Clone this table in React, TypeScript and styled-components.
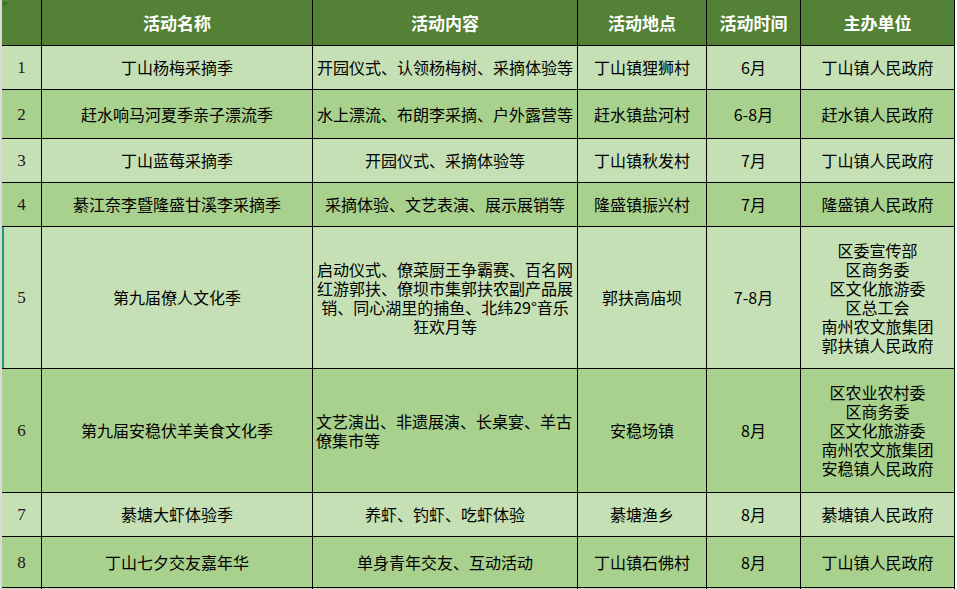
import React from "react";
import styled, { createGlobalStyle } from "styled-components";

const Global = createGlobalStyle`
  html, body { margin: 0; padding: 0; background: #ffffff; }
  body { font-family: "Noto Sans CJK SC", "Noto Sans", sans-serif; overflow: hidden; }
`;

const COLS = "40px 271px 265px 129px 94px 154px";

const Sheet = styled.div`
  display: flex;
  width: 957px;
  height: 589px;
  overflow: hidden;
`;

const Gutter = styled.div`
  width: 2px;
  flex: none;
  background: #d9d9d9;
`;

const Table = styled.div`
  display: flex;
  flex-direction: column;
  width: 953px;
  flex: none;
`;

const Row = styled.div<{ $h: number; $bg: string }>`
  display: grid;
  grid-template-columns: ${COLS};
  height: ${(p) => p.$h}px;
  background: ${(p) => p.$bg};
  flex: none;
`;

const Cell = styled.div<{ $left?: boolean; $marker?: boolean }>`
  position: relative;
  box-sizing: border-box;
  border-right: 1px solid #000;
  border-bottom: 1px solid #000;
  display: flex;
  align-items: center;
  justify-content: ${(p) => (p.$left ? "flex-start" : "center")};
  text-align: ${(p) => (p.$left ? "left" : "center")};
  padding: 0 3px;
  font-size: 16px;
  line-height: 19px;
  color: #000;
  box-shadow: ${(p) => (p.$marker ? "inset 2px 0 0 #1f9d6e" : "none")};
`;

const HeadCell = styled(Cell)`
  color: #ffffff;
  font-weight: 700;
  font-size: 17px;
  line-height: 20px;
`;

const NumCell = styled(Cell)`
  font-family: "Liberation Serif", "DejaVu Serif", serif;
  font-size: 17px;
  color: #1a1a1a;
`;

const Corner = styled.span`
  position: absolute;
  left: 1px;
  top: 2px;
  width: 0;
  height: 0;
  border-top: 5px solid #1e7b22;
  border-right: 5px solid transparent;
`;

const Text = styled.span`
  display: block;
`;

type Item = {
  n: string;
  name: string;
  content: string;
  place: string;
  time: string;
  org: string[];
  h: number;
  leftContent?: boolean;
  marker?: boolean;
};

const LIGHT = "#c5e0b4";
const DARK = "#a9d18e";
const HEAD = "#538135";

const rows: Item[] = [
  { n: "1", name: "丁山杨梅采摘季", content: "开园仪式、认领杨梅树、采摘体验等", place: "丁山镇狸狮村", time: "6月", org: ["丁山镇人民政府"], h: 44 },
  { n: "2", name: "赶水响马河夏季亲子漂流季", content: "水上漂流、布朗李采摘、户外露营等", place: "赶水镇盐河村", time: "6-8月", org: ["赶水镇人民政府"], h: 49 },
  { n: "3", name: "丁山蓝莓采摘季", content: "开园仪式、采摘体验等", place: "丁山镇秋发村", time: "7月", org: ["丁山镇人民政府"], h: 44 },
  { n: "4", name: "綦江奈李暨隆盛甘溪李采摘季", content: "采摘体验、文艺表演、展示展销等", place: "隆盛镇振兴村", time: "7月", org: ["隆盛镇人民政府"], h: 44 },
  {
    n: "5",
    name: "第九届僚人文化季",
    content: "启动仪式、僚菜厨王争霸赛、百名网红游郭扶、僚坝市集郭扶农副产品展销、同心湖里的捕鱼、北纬29°音乐狂欢月等",
    place: "郭扶高庙坝",
    time: "7-8月",
    org: ["区委宣传部", "区商务委", "区文化旅游委", "区总工会", "南州农文旅集团", "郭扶镇人民政府"],
    h: 142,
    marker: true,
  },
  {
    n: "6",
    name: "第九届安稳伏羊美食文化季",
    content: "文艺演出、非遗展演、长桌宴、羊古僚集市等",
    place: "安稳场镇",
    time: "8月",
    org: ["区农业农村委", "区商务委", "区文化旅游委", "南州农文旅集团", "安稳镇人民政府"],
    h: 124,
    leftContent: true,
  },
  { n: "7", name: "綦塘大虾体验季", content: "养虾、钓虾、吃虾体验", place: "綦塘渔乡", time: "8月", org: ["綦塘镇人民政府"], h: 44 },
  { n: "8", name: "丁山七夕交友嘉年华", content: "单身青年交友、互动活动", place: "丁山镇石佛村", time: "8月", org: ["丁山镇人民政府"], h: 51 },
];

export default function App() {
  return (
    <>
      <Global />
      <Sheet>
        <Gutter />
        <Table>
          <Row $h={46} $bg={HEAD}>
            <HeadCell>
              <Corner />
            </HeadCell>
            <HeadCell>活动名称</HeadCell>
            <HeadCell>活动内容</HeadCell>
            <HeadCell>活动地点</HeadCell>
            <HeadCell>活动时间</HeadCell>
            <HeadCell>主办单位</HeadCell>
          </Row>
          {rows.map((r, i) => (
            <Row key={r.n} $h={r.h} $bg={i % 2 === 0 ? LIGHT : DARK}>
              <NumCell $marker={r.marker}>{r.n}</NumCell>
              <Cell>{r.name}</Cell>
              <Cell $left={r.leftContent}>
                <Text>{r.content}</Text>
              </Cell>
              <Cell>{r.place}</Cell>
              <Cell>{r.time}</Cell>
              <Cell>
                <Text>
                  {r.org.map((o) => (
                    <Text key={o}>{o}</Text>
                  ))}
                </Text>
              </Cell>
            </Row>
          ))}
          <Row $h={40} $bg={LIGHT}>
            <NumCell />
            <Cell />
            <Cell />
            <Cell />
            <Cell />
            <Cell />
          </Row>
        </Table>
      </Sheet>
    </>
  );
}
